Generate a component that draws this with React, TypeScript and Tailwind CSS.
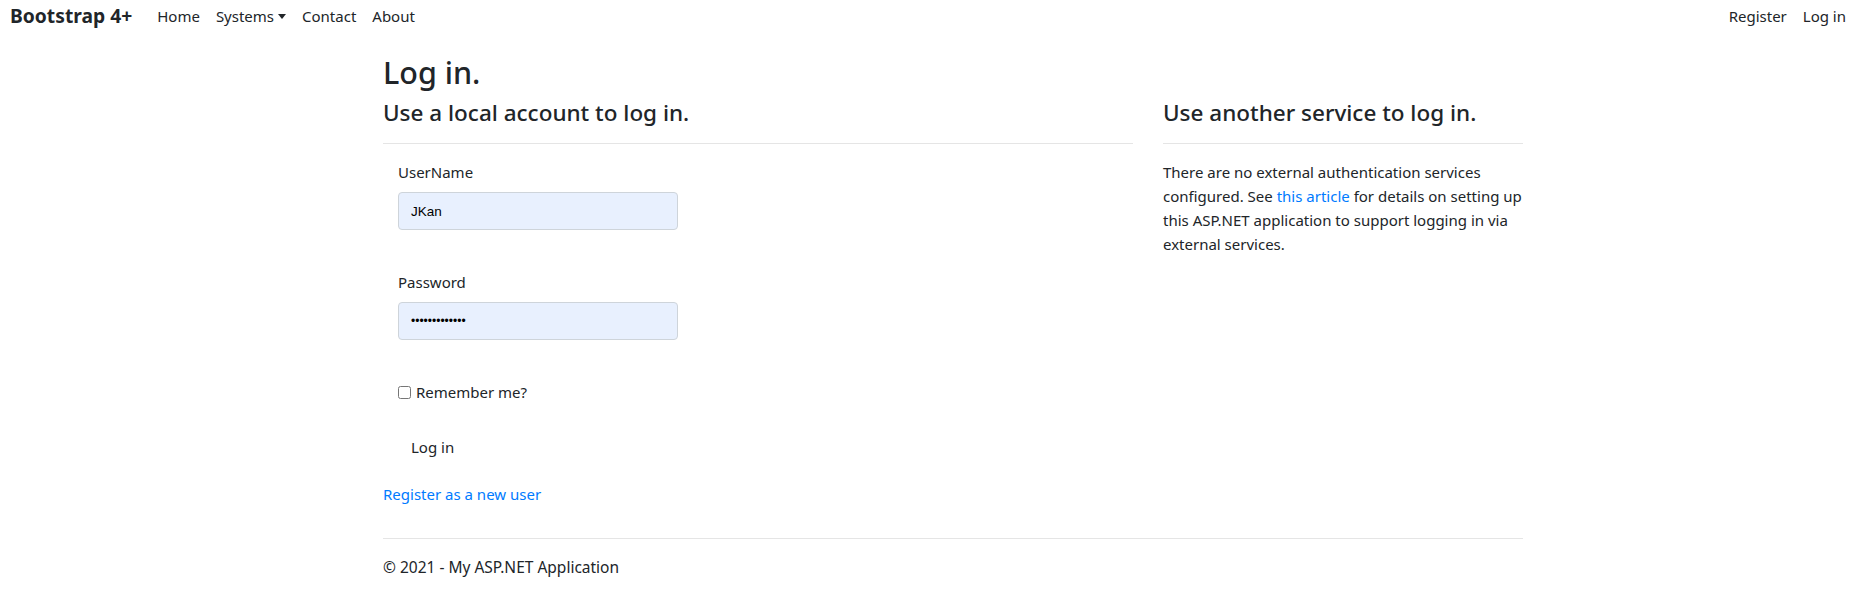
import { ReactNode } from "react";

// Compact Bootstrap-style top bar
function NavLink({ children, caret }: { children: ReactNode; caret?: boolean }) {
  return (
    <a href="#" className="flex items-center px-2 text-[15px] leading-6 text-[#212529]">
      {children}
      {caret && (
        <span className="ml-[4px] mt-[1px] inline-block h-0 w-0 border-x-[4.5px] border-t-[5px] border-x-transparent border-t-[#212529]" />
      )}
    </a>
  );
}

function Field({ label, children }: { label: string; children: ReactNode }) {
  return (
    <div className="mb-10">
      <label className="mb-2 block text-[15px] leading-6">{label}</label>
      {children}
    </div>
  );
}

export default function App() {
  return (
    <div className="min-h-screen bg-white font-['Noto_Sans',sans-serif] text-[#212529]">
      <nav className="flex h-[31px] items-center pl-[10px] pr-2">
        <a href="#" className="mr-[17px] text-[19.25px] font-bold leading-none text-[#212529]">
          Bootstrap 4+
        </a>
        <div className="flex">
          <NavLink>Home</NavLink>
          <NavLink caret>Systems</NavLink>
          <NavLink>Contact</NavLink>
          <NavLink>About</NavLink>
        </div>
        <div className="ml-auto flex">
          <NavLink>Register</NavLink>
          <NavLink>Log in</NavLink>
        </div>
      </nav>

      <main className="ml-[383px] w-[1140px]">
        <h2 className="mt-[22px] text-[30.5px] font-medium leading-[38px]">Log in.</h2>

        <div className="mt-[7px] flex">
          {/* local account */}
          <section className="mr-[30px] w-[750px]">
            <h4 className="text-[22.5px] font-medium leading-[29px]">
              Use a local account to log in.
            </h4>
            <hr className="mt-4 border-t border-[#e5e5e5]" />
            <form className="mt-4 px-[15px]">
              <Field label="UserName">
                <input
                  readOnly
                  value="JKan"
                  className="block h-[38px] w-[280px] rounded-[4px] border border-[#ced4da] bg-[#e8f0fe] px-3 font-['Liberation_Sans',sans-serif] text-[13.5px] text-black outline-none"
                />
              </Field>
              <Field label="Password">
                <input
                  readOnly
                  type="password"
                  value="aaaaaaaaaaaaa"
                  className="block h-[38px] w-[280px] rounded-[4px] border border-[#ced4da] bg-[#e8f0fe] px-3 font-['Liberation_Sans',sans-serif] text-[12px] text-black outline-none"
                />
              </Field>
              <label className="flex h-6 items-center text-[15px] leading-6">
                <input type="checkbox" className="m-0 h-[13px] w-[13px]" />
                <span className="ml-[5px]">Remember me?</span>
              </label>
              <button
                type="button"
                className="mt-6 block h-[38px] rounded-[4px] border border-transparent px-3 text-[15px] leading-6"
              >
                Log in
              </button>
            </form>
            <p className="mt-4 text-[15px] leading-6">
              <a href="#" className="text-[#007bff]">
                Register as a new user
              </a>
            </p>
          </section>

          {/* external services */}
          <section className="w-[360px]">
            <h4 className="text-[22.5px] font-medium leading-[29px]">
              Use another service to log in.
            </h4>
            <hr className="mt-4 border-t border-[#e5e5e5]" />
            <p className="mt-4 whitespace-nowrap text-[15px] leading-6">
              There are no external authentication services
              <br />
              configured. See{" "}
              <a href="#" className="text-[#007bff]">
                this article
              </a>{" "}
              for details on setting up
              <br />
              this ASP.NET application to support logging in via
              <br />
              external services.
            </p>
          </section>
        </div>

        <hr className="mt-8 border-t border-[#e5e5e5]" />
        <footer className="mt-4 text-[15.5px] leading-6">© 2021 - My ASP.NET Application</footer>
      </main>
    </div>
  );
}
